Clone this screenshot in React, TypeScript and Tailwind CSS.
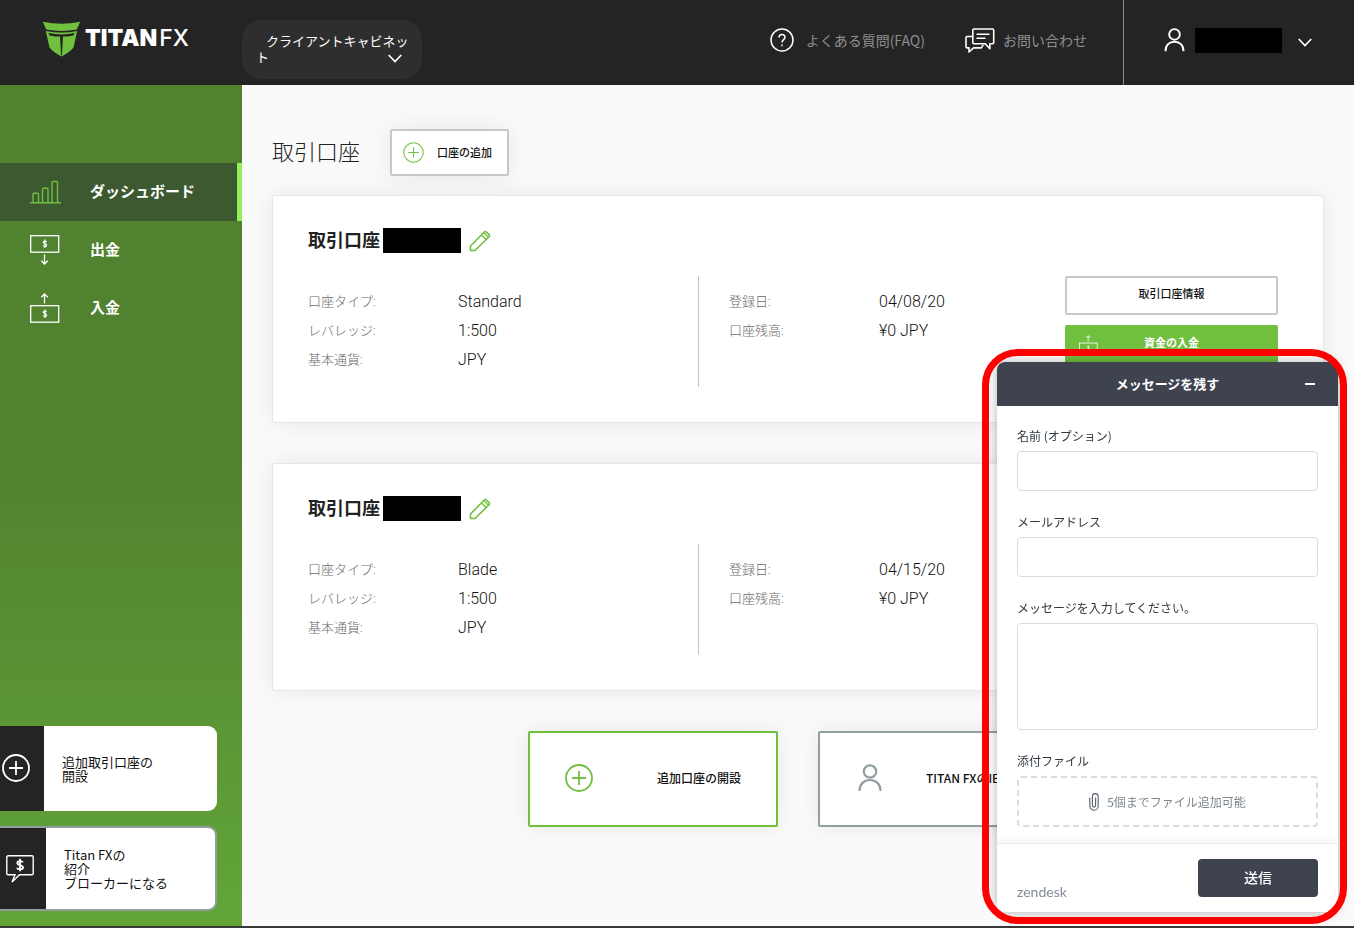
import type { ReactNode } from "react";

const jp = "font-['Noto_Sans_CJK_JP',sans-serif]";
const mixed = "font-[Roboto,'Noto_Sans_CJK_JP',sans-serif]";

function Chevron() {
  return (
    <svg width="14" height="9" viewBox="0 0 14 9" fill="none" stroke="#fff" strokeWidth="1.700" aria-hidden="true">
      <path d="M.7 1L7 7.500L13.300 1" />
    </svg>
  );
}

function PersonIcon({ className, stroke = 2 }: { className: string; stroke?: number }) {
  return (
    <svg className={className} viewBox="0 0 24 28" fill="none" stroke="currentColor" strokeWidth={stroke} aria-hidden="true">
      <circle cx="12" cy="7.500" r="6.200" />
      <path d="M1.500 27c0-7 4.500-11 10.500-11s10.500 4 10.500 11" />
    </svg>
  );
}

function PlusCircle({ className, stroke }: { className: string; stroke: number }) {
  return (
    <svg className={className} viewBox="0 0 28 28" fill="none" stroke="currentColor" strokeWidth={stroke} aria-hidden="true">
      <circle cx="14" cy="14" r="13" />
      <path d="M14 7v14M7 14h14" />
    </svg>
  );
}

function CashIcon({ up, className }: { up?: boolean; className: string }) {
  return (
    <svg className={className} viewBox="0 0 30 30" fill="none" stroke="#fff" strokeWidth="1.300" aria-hidden="true">
      <rect x="0.700" y={up ? 12.7 : 0.7} width="28" height="16.500" />
      <g transform={up ? "translate(0 12)" : undefined}>
        <path strokeWidth="1.200" d="M16.500 7c-.4-1.200-3.300-1.300-3.300.3 0 1.600 3.500 1.100 3.500 2.900 0 1.500-3.200 1.500-3.700.2M14.900 4.500v8.500" />
      </g>
      <path d={up ? "M14.500 10.500V1M11.300 4.300l3.200-3.300 3.200 3.300" : "M14.500 19.500v9.500M11.300 25.700l3.200 3.300 3.200-3.300"} />
    </svg>
  );
}

function Logo() {
  return (
    <a href="#" className="flex items-start gap-1 text-white" aria-label="TITAN FX">
      <svg width="39" height="36" viewBox="0 0 39 36" aria-hidden="true">
        <path fill="#70bf3f" d="M.8 .8Q19.500 4.800 38.200 .8L34.800 8.600Q19.500 11.500 4.200 8.600Z" />
        <path fill="#70bf3f" d="M3.800 10Q19.500 13 35.200 10L31.500 26.500Q28 31 19.500 35.500Q11 31 7.500 26.500Z" />
        <path fill="#242424" d="M6.500 12Q19.500 14.800 32.500 12L31.500 14.400Q25 15.600 21 15.600L19.900 34.500H19.100L18 15.600Q14 15.600 7.500 14.400Z" />
      </svg>
      <span className="flex pt-[5px] font-[Inter,sans-serif] text-[23px] leading-6">
        <span className="font-black">TITAN</span>
        <span className="pl-[2px] font-medium">FX</span>
      </span>
    </a>
  );
}

function Header() {
  return (
    <header className="flex h-[85px] shrink-0 items-stretch bg-[#242424]">
      <div className="flex w-[242px] shrink-0 items-start pl-[42px] pt-[21px]">
        <Logo />
      </div>
      <button
        type="button"
        className={`relative mt-5 h-[59px] w-[180px] shrink-0 rounded-[20px] bg-[#2e2e2e] pb-[2px] pl-[14px] pr-[11px] text-left indent-[10px] text-[13px] leading-4 text-white ${jp}`}
      >
        クライアントキャビネット
        <span className="absolute bottom-4 right-5 indent-0">
          <Chevron />
        </span>
      </button>
      <nav className={`ml-auto flex items-center gap-10 pb-[6px] pr-9 text-[14px] leading-5 text-[#8e8e8e] ${jp}`}>
        <a href="#" className="flex items-center gap-3">
          <svg width="24" height="24" viewBox="0 0 24 24" fill="none" stroke="#fff" strokeWidth="1.500" aria-hidden="true">
            <circle cx="12" cy="12" r="11" />
            <path d="M9 9.500c0-4 6-4 6-.3 0 2.500-3 2.300-3 5.300" />
            <path d="M12 16.500v1.800" />
          </svg>
          よくある質問(FAQ)
        </a>
        <a href="#" className="flex items-center gap-2">
          <svg width="30" height="26" viewBox="0 0 30 26" fill="none" stroke="#fff" strokeWidth="1.600" strokeLinejoin="round" aria-hidden="true">
            <path d="M9 2h18.500a1.200 1.200 0 0 1 1.200 1.200V15.500a1.200 1.200 0 0 1-1.200 1.200H24.800v5l-4.600-5H9a1.200 1.200 0 0 1-1.200-1.200V3.200A1.200 1.200 0 0 1 9 2Z" />
            <path d="M11.500 7.300h13M11.500 11.300h9" />
            <path d="M7.500 9.500H2.200A1.200 1.200 0 0 0 1 10.700v9a1.200 1.200 0 0 0 1.200 1.200H4V25l4.500-4.100h7.800l2-3" />
          </svg>
          お問い合わせ
        </a>
      </nav>
      <button type="button" aria-label="アカウント" className="flex w-[231px] shrink-0 items-center border-l border-[#8a8a8a] pb-[5px] pl-10 text-white">
        <PersonIcon className="h-6 w-[21px]" stroke={2.2} />
        <span className="ml-[10px] h-[25px] w-[87px] bg-black" />
        <span className="ml-4 pt-1">
          <Chevron />
        </span>
      </button>
    </header>
  );
}

function NavItem({ icon, label, active }: { icon: ReactNode; label: string; active?: boolean }) {
  return (
    <a
      href="#"
      className={`flex h-[58px] items-center pl-[30px] text-[15px] font-bold text-white ${
        active ? "border-r-[5px] border-[#93ee5c] bg-[#3d5930]" : ""
      }`}
    >
      <span className="w-[60px]">{icon}</span>
      <span className="pb-[2px]">{label}</span>
    </a>
  );
}

function Sidebar() {
  return (
    <aside className={`flex w-[242px] shrink-0 flex-col justify-between bg-linear-to-b from-[#518230] from-45% to-[#62a638] pb-[15px] pt-[78px] ${jp}`}>
      <nav>
        <NavItem
          active
          label="ダッシュボード"
          icon={
            <svg width="31" height="24" viewBox="0 0 31 24" fill="none" stroke="#70bf3f" strokeWidth="1.400" aria-hidden="true">
              <path d="M0 22.800h31M3 22V14.200a1 1 0 0 1 1-1h3.500a1 1 0 0 1 1 1V22M12.500 22V9.200a1 1 0 0 1 1-1H17a1 1 0 0 1 1 1V22M22 22V2.500a1 1 0 0 1 1-1h3.500a1 1 0 0 1 1 1V22" />
            </svg>
          }
        />
        <NavItem label="出金" icon={<CashIcon className="size-[30px]" />} />
        <NavItem label="入金" icon={<CashIcon up className="size-[30px]" />} />
      </nav>
      <div className="flex flex-col gap-[15px] pr-[25px] text-[13px] leading-[14px] text-[#111]">
        <a href="#" className="flex h-[85px] overflow-hidden rounded-r-[9px] bg-white">
          <span className="flex w-11 items-center bg-[#242424] pb-[2px] pl-[2px] text-white">
            <PlusCircle className="size-7" stroke={1.8} />
          </span>
          <span className="self-center pl-[18px]">
            追加取引口座の
            <br />
            開設
          </span>
        </a>
        <a href="#" className="flex h-[85px] overflow-hidden rounded-r-[9px] border-2 border-l-0 border-[#929da0] bg-white">
          <span className="flex w-[46px] items-center bg-[#242424] pl-[6px] text-white">
            <svg width="28" height="28" viewBox="0 0 28 28" fill="none" stroke="#fff" strokeWidth="1.400" aria-hidden="true">
              <path d="M2 .8h24a1.200 1.200 0 0 1 1.200 1.200v16.500a1.200 1.200 0 0 1-1.200 1.200H13.500L6 27l3-7.300H2A1.200 1.200 0 0 1 .8 18.500V2A1.200 1.200 0 0 1 2 .8Z" />
              <path strokeWidth="1.800" d="M16.800 7.500c-.6-2-5.500-2-5.500.5s5.700 1.800 5.700 4.500c0 2.500-5.300 2.500-6 .2M14 3.800v12.500" />
            </svg>
          </span>
          <span className="self-center pl-[18px]">
            Titan FXの
            <br />
            紹介
            <br />
            ブローカーになる
          </span>
        </a>
      </div>
    </aside>
  );
}

function Details({ rows }: { rows: [string, string][] }) {
  return (
    <dl className="grid auto-rows-[29px] grid-cols-[150px_1fr] items-center pt-[11px]">
      {rows.map(([label, value]) => (
        <div key={label} className="contents">
          <dt className="text-[13px] font-light text-[#6b6b6b]">{label}</dt>
          <dd className="text-[16px] font-light text-[#111]">{value}</dd>
        </div>
      ))}
    </dl>
  );
}

function AccountCard({ type, date, actions }: { type: string; date: string; actions?: boolean }) {
  return (
    <section className={`h-[228px] rounded-[2px] border border-[#e6e6e6] bg-white pl-[35px] pr-[45px] pt-8 shadow-[0_0_25px_rgba(0,0,0,0.08)] ${mixed}`}>
      <div className="flex h-[25px] items-center">
        <h2 className="text-[18px] font-bold text-[#222]">取引口座</h2>
        <span className="ml-[3px] h-[25px] w-[78px] bg-black" />
        <button type="button" aria-label="編集" className="ml-2">
          <svg width="22" height="22" viewBox="0 0 22 22" fill="none" stroke="#70bf3f" strokeWidth="1.600" strokeLinejoin="round" aria-hidden="true">
            <path d="M1.500 20.500V16L15.300 2a1.500 1.500 0 0 1 2.100 0L20 4.600a1.500 1.500 0 0 1 0 2.100L6 20.500Z" />
            <path d="M12.500 5l4.500 4.500M15 2.800l4.300 4.300" strokeWidth="1.300" />
          </svg>
        </button>
      </div>
      <div className="mt-[23px] flex h-[111px]">
        <div className="w-[391px] shrink-0 border-r border-[#c4c4c4]">
          <Details
            rows={[
              ["口座タイプ:", type],
              ["レバレッジ:", "1:500"],
              ["基本通貨:", "JPY"],
            ]}
          />
        </div>
        <div className="flex-1 pl-[30px]">
          <Details
            rows={[
              ["登録日:", date],
              ["口座残高:", "¥0 JPY"],
            ]}
          />
        </div>
        {actions && (
          <div className="flex w-[213px] shrink-0 flex-col gap-[10px] text-[11px]">
            <button type="button" className="h-[39px] rounded-[2px] border-2 border-[#c8c8c8] bg-white font-medium text-[#111]">
              取引口座情報
            </button>
            <button type="button" className="flex h-[39px] items-center rounded-[2px] bg-[#70bf3f] px-[14px] font-bold text-white">
              <CashIcon up className="size-[19px]" />
              <span className="flex-1 pr-[19px] text-center">資金の入金</span>
            </button>
          </div>
        )}
      </div>
    </section>
  );
}

function Main() {
  return (
    <main className="flex-1 bg-[#fafafa] px-[30px] pt-11">
      <div className="flex items-center gap-[30px]">
        <h1 className={`pb-[6px] text-[22px] font-light leading-8 text-[#222] ${jp}`}>取引口座</h1>
        <button
          type="button"
          className={`flex h-[47px] w-[119px] items-center justify-between rounded-[2px] border-2 border-[#c8c8c8] bg-white pl-[11px] pr-[15px] text-[11px] font-medium text-[#111] shadow-[0_0_25px_rgba(0,0,0,0.08)] ${jp}`}
        >
          <PlusCircle className="size-[21px] text-[#70bf3f]" stroke={1.4} />
          口座の追加
        </button>
      </div>
      <div className="mt-[19px] flex flex-col gap-10">
        <AccountCard type="Standard" date="04/08/20" actions />
        <AccountCard type="Blade" date="04/15/20" />
      </div>
      <div className={`mt-10 flex justify-center gap-10 text-[12px] font-medium text-[#111] ${jp}`}>
        <button type="button" className="flex h-24 w-[250px] items-center justify-between rounded-[2px] border-2 border-[#70bf3f] bg-white px-[35px] pb-[2px] shadow-[0_0_25px_rgba(0,0,0,0.08)]">
          <PlusCircle className="size-7 text-[#70bf3f]" stroke={1.8} />
          追加口座の開設
        </button>
        <button type="button" className="flex h-24 w-[250px] items-center whitespace-nowrap rounded-[2px] border-2 border-[#929fa0] bg-white pb-[2px] pl-[38px] shadow-[0_0_25px_rgba(0,0,0,0.08)]">
          <PersonIcon className="h-7 w-6 text-[#929fa0]" stroke={2.2} />
          <span className="pl-11">TITAN FXのIBになる</span>
        </button>
      </div>
    </main>
  );
}

function ChatWidget() {
  const field = "block w-full rounded-[4px] border border-[#d8dcde] bg-white px-3 text-[14px] text-[#2f3941]";
  const label = "mb-[5px] block text-[12px] leading-5 text-[#2f3941]";
  return (
    <div className={`fixed bottom-4 right-4 w-[341px] ${jp}`}>
      <form className="overflow-hidden rounded-[8px] bg-white shadow-[0_0_12px_rgba(0,0,0,0.3)]">
        <div className="flex h-11 items-center bg-[#3e434f] px-5 text-white">
          <h2 className="flex-1 pl-4 text-center text-[13px] font-bold">メッセージを残す</h2>
          <button type="button" aria-label="最小化" className="flex h-5 w-4 items-center justify-center">
            <span className="h-[2px] w-[10px] bg-white" />
          </button>
        </div>
        <div className="flex flex-col gap-[21px] px-5 pb-4 pt-5">
          <div>
            <label htmlFor="name" className={label}>名前 (オプション)</label>
            <input id="name" type="text" className={`${field} h-10`} />
          </div>
          <div>
            <label htmlFor="mail" className={label}>メールアドレス</label>
            <input id="mail" type="email" className={`${field} h-10`} />
          </div>
          <div>
            <label htmlFor="message" className={label}>メッセージを入力してください。</label>
            <textarea id="message" className={`${field} h-[107px] resize-none`} />
          </div>
          <div>
            <p className={label}>添付ファイル</p>
            <button type="button" className="flex h-[51px] w-full items-center justify-center gap-2 rounded-[4px] border-2 border-dashed border-[#d8dcde] text-[12px] text-[#7d868f]">
              <svg width="10" height="18" viewBox="0 0 10 18" fill="none" stroke="#555d66" strokeWidth="1.100" strokeLinecap="round" aria-hidden="true">
                <path d="M.8 5v8a4.200 4.200 0 0 0 8.400 0V3.500a2.900 2.900 0 0 0-5.800 0V12.500a1.600 1.600 0 0 0 3.200 0V5" />
              </svg>
              5個までファイル追加可能
            </button>
          </div>
        </div>
        <div className="flex h-[69px] items-start justify-between border-t border-[#ebebee] px-5 pt-[15px] shadow-[0_-4px_8px_rgba(0,0,0,0.04)]">
          <a href="#" className="self-end pb-3 font-[Lato,sans-serif] text-[14px] leading-4 text-[#858b9b]">zendesk</a>
          <button type="submit" className="h-[38px] w-[120px] rounded-[4px] bg-[#3e434f] pb-[2px] text-[14px] font-medium text-white">
            送信
          </button>
        </div>
      </form>
      <div className="pointer-events-none absolute -bottom-3 -left-[15px] -right-[9px] -top-[13px] rounded-[36px] border-[7px] border-[#fe0000]" />
    </div>
  );
}

export default function App() {
  return (
    <div className="flex min-h-screen flex-col bg-[#fafafa]">
      <Header />
      <div className="flex flex-1">
        <Sidebar />
        <Main />
      </div>
      <div className="h-[2px] bg-[#3a3a3a]" />
      <ChatWidget />
    </div>
  );
}
